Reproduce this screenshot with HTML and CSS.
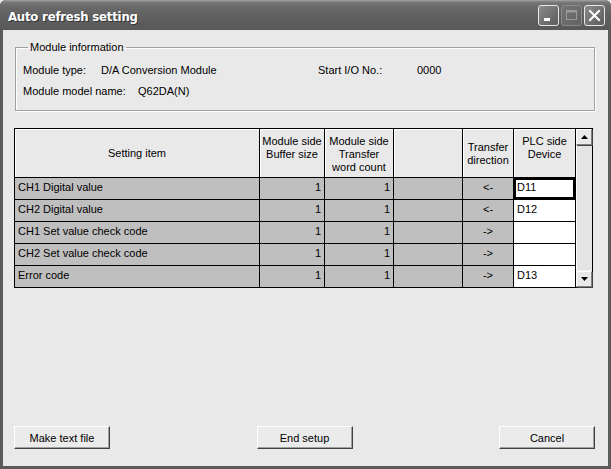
FILE: index.html
```html
<!DOCTYPE html>
<html>
<head>
<meta charset="utf-8">
<link rel="stylesheet" href="styles.css">
</head>
<body>
<div class="window">
  <div class="titlebar">
    <span class="title">Auto refresh setting</span>
    <div class="tb-buttons">
      <span class="tb-btn"><svg width="19" height="19" viewBox="0 0 19 19"><rect x="5" y="12" width="6" height="3" fill="#fff"/></svg></span>
      <span class="tb-btn disabled"><svg width="19" height="19" viewBox="0 0 19 19"><rect x="4.5" y="4.5" width="10" height="9" fill="none" stroke="#9a9a9a" stroke-width="1"/><rect x="4.5" y="4.5" width="10" height="2" fill="#9a9a9a"/></svg></span>
      <span class="tb-btn close"><svg width="19" height="19" viewBox="0 0 19 19"><path d="M5 5 L14 14 M14 5 L5 14" stroke="#fff" stroke-width="2" stroke-linecap="square"/></svg></span>
    </div>
  </div>
  <div class="client">
    <fieldset class="group">
      <legend>Module information</legend>
      <div class="info-row">
        <span class="lbl w78">Module type:</span>
        <span class="val w217">D/A Conversion Module</span>
        <span class="lbl w99">Start I/O No.:</span>
        <span class="val">0000</span>
      </div>
      <div class="info-row">
        <span class="lbl w115">Module model name:</span>
        <span class="val">Q62DA(N)</span>
      </div>
    </fieldset>

    <div class="gridbox">
      <div class="grid">
        <div class="h mid">Setting item</div>
        <div class="h">Module side<br>Buffer size</div>
        <div class="h">Module side<br>Transfer<br>word count</div>
        <div class="h"></div>
        <div class="h mid2">Transfer<br>direction</div>
        <div class="h">PLC side<br>Device</div>

        <div class="c">CH1 Digital value</div><div class="c num">1</div><div class="c num">1</div><div class="c"></div><div class="c ctr">&lt;-</div><div class="c plc focus">D11</div>
        <div class="c">CH2 Digital value</div><div class="c num">1</div><div class="c num">1</div><div class="c"></div><div class="c ctr">&lt;-</div><div class="c plc">D12</div>
        <div class="c">CH1 Set value check code</div><div class="c num">1</div><div class="c num">1</div><div class="c"></div><div class="c ctr">-&gt;</div><div class="c plc"></div>
        <div class="c">CH2 Set value check code</div><div class="c num">1</div><div class="c num">1</div><div class="c"></div><div class="c ctr">-&gt;</div><div class="c plc"></div>
        <div class="c">Error code</div><div class="c num">1</div><div class="c num">1</div><div class="c"></div><div class="c ctr">-&gt;</div><div class="c plc">D13</div>
      </div>
      <div class="vscroll">
        <span class="sbtn"><svg width="7" height="4" viewBox="0 0 7 4"><path d="M3.5 0 L7 4 L0 4 Z" fill="#000"/></svg></span>
        <span class="track"></span>
        <span class="sbtn"><svg width="7" height="4" viewBox="0 0 7 4"><path d="M0 0 L7 0 L3.5 4 Z" fill="#000"/></svg></span>
      </div>
    </div>

    <div class="actions">
      <button class="btn">Make text file</button>
      <button class="btn">End setup</button>
      <button class="btn">Cancel</button>
    </div>
  </div>
</div>
</body>
</html>
```
FILE: styles.css
```css
* { box-sizing: border-box; }
html, body { margin: 0; padding: 0; background: #e9e9e9; }
body {
  width: 611px; height: 469px; overflow: hidden;
  font-family: "Liberation Sans", Arial, sans-serif;
  font-size: 11px; color: #000;
}
.window {
  width: 611px; height: 469px;
  display: flex; flex-direction: column;
  background: #5a5a5a;
  border-radius: 6px 6px 0 0;
  overflow: hidden;
}
.titlebar {
  height: 30px; flex: none;
  display: flex; align-items: center; justify-content: space-between;
  padding: 0 6px 0 8px;
  background: linear-gradient(#a5a5a5 0, #7a7a7a 2px, #6a6a6a 6px, #616161 50%, #585858 100%);
}
.title {
  color: #fff; font-weight: bold; font-size: 13px;
  font-family: "DejaVu Sans Condensed", "DejaVu Sans", sans-serif;
  font-stretch: condensed;
  letter-spacing: -0.2px;
  text-shadow: 1px 1px 0 #333;
  padding-top: 2px;
}
.tb-buttons { display: flex; gap: 2px; padding-top: 0; }
.tb-btn {
  width: 21px; height: 21px; display: flex; align-items: center; justify-content: center;
  border: 1px solid #e8e8e8; border-radius: 3px;
  background: linear-gradient(135deg, #8a8a8a, #5c5c5c);
}
.tb-btn.disabled { border-color: #8a8a8a; background: linear-gradient(135deg, #747474, #626262); }
.client {
  flex: 1;
  margin: 0 3px 3px 3px;
  background: #e9e9e9;
  display: flex; flex-direction: column;
  padding: 11px 13px 17px 11px;
}
.group {
  margin: 0 0 0 1px;
  padding: 10px 0 12px 7px;
  border: 1px solid #a0a0a0;
  box-shadow: inset 1px 1px 0 #fff, 1px 1px 0 #fff;
  width: 580px;
}
.group legend {
  padding: 0 2px; margin-left: 5px;
  line-height: 13px;
}
.info-row { display: flex; line-height: 13px; height: 13px; }
.info-row + .info-row { margin-top: 8px; }
.w78 { width: 78px; }
.w217 { width: 217px; }
.w99 { width: 99px; }
.w115 { width: 115px; }

.gridbox {
  margin-top: 17px;
  display: flex;
  width: 579px;
  border: 1px solid #000;
}
.grid {
  display: grid;
  grid-template-columns: 244px 64px 68px 68px 50px 61px;
  grid-template-rows: 48px repeat(5, 21px);
  gap: 1px;
  background: #000;
  border-right: 1px solid #000;
}
.h {
  background: #e9e9e9;
  box-shadow: inset 1px 1px 0 #fff;
  text-align: center;
  line-height: 13px;
  padding-top: 6px;
}
.h.mid { display: flex; align-items: center; justify-content: center; padding-top: 0; }
.h.mid2 { padding-top: 12px; }
.c {
  background: #bfbfbf;
  line-height: 13px;
  padding: 3px 3px 0 3px;
  white-space: nowrap;
}
.c.num { text-align: right; }
.c.ctr { text-align: center; }
.c.plc { background: #fff; padding-left: 3px; }
.c.focus { box-shadow: inset 0 0 0 2px #000; padding-left: 3px; }
.vscroll {
  width: 16px;
  display: flex; flex-direction: column;
  background: #f0f0f0;
}
.sbtn {
  width: 16px; height: 16px; flex: none;
  display: flex; align-items: center; justify-content: center;
  background: #e9e9e9;
  border: 1px solid; border-color: #fff #808080 #808080 #fff;
  box-shadow: 1px 1px 0 #404040;
}
.track {
  flex: 1;
  margin: 1px 0;
  background: #e4e4e4;
  border-left: 1px solid #fff;
}
.actions {
  margin-top: auto;
  display: flex; justify-content: space-between;
  padding-left: 0;
}
.btn {
  width: 96px; height: 23px;
  font-family: "Liberation Sans", Arial, sans-serif;
  font-size: 11px; color: #000;
  background: #ebebeb;
  border: 1px solid; border-color: #fff #404040 #404040 #fff;
  box-shadow: inset -1px -1px 0 #a0a0a0;
  padding: 0; margin: 0;
}
```
